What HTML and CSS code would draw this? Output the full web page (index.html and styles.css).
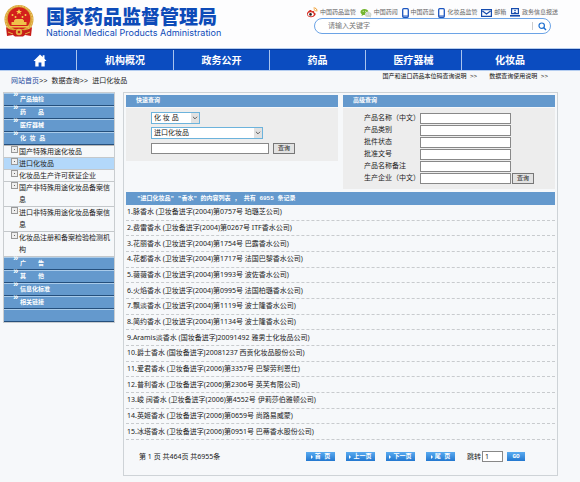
FILE: index.html
```html
<!DOCTYPE html>
<html lang="zh-CN">
<head>
<meta charset="utf-8">
<title>国家药品监督管理局</title>
<link rel="stylesheet" href="styles.css">
</head>
<body>
<header class="top">
  <a class="brand" href="#">
    <svg class="emblem" viewBox="0 0 30 32" aria-hidden="true">
      <ellipse cx="15" cy="14.500" rx="14.500" ry="14.500" fill="#d9a336"/>
      <ellipse cx="15" cy="14.500" rx="13.300" ry="13.500" fill="none" stroke="#f0cf72" stroke-width="1" stroke-dasharray="2 1"/>
      <circle cx="15" cy="13.500" r="11.300" fill="#d3201c"/>
      <path d="M15 4l.9 2h2.100l-1.700 1.300.7 2.100-2-1.300-2 1.300.7-2.100L12 6h2.100z" fill="#f7d04f"/>
      <g fill="#f7d04f"><circle cx="8.500" cy="10" r="1"/><circle cx="11.500" cy="12" r="1"/><circle cx="18.500" cy="12" r="1"/><circle cx="21.500" cy="10" r="1"/></g>
      <path d="M10 15.500l1.500-1.500h7l1.500 1.500v1.500h2.500v3h-15v-3H10zM5 21h20v1.500H5z" fill="#efc14a"/>
      <path d="M2 22q4 4 9 3h8q5 1 9-3l-1 9-6-1-2 1.500h-8L9 30l-6 1z" fill="#c71d19"/>
      <circle cx="15" cy="27" r="3.200" fill="#e3b243"/><circle cx="15" cy="27" r="1.300" fill="#c71d19"/>
      <path d="M4 27l5 2M26 27l-5 2" stroke="#e3b243"/>
    </svg>
    <span class="names"><strong>国家药品监督管理局</strong><span class="en">National Medical Products Administration</span></span>
  </a>
  <div class="tools">
    <ul class="social">
      <li><a href="#"><svg width="12" height="11" viewBox="0 0 12 11"><path d="M1 7c0-2 3-4.500 4.300-3.800.6.300.2 1.200.2 1.200s2.600-1 2.700.6c0 .4-.2.600-.2.600C12 7 8 10.500 5 10.300 2.500 10.200 1 8.800 1 7z" fill="#d52b20"/><ellipse cx="4.800" cy="7.300" rx="2.900" ry="2" fill="#fff"/><circle cx="4.500" cy="7.400" r="1.300" fill="#222"/><path d="M7.500 1c2-.5 4 1.200 3.300 3.500M7.800 2.800c1-.2 1.700.4 1.400 1.500" fill="none" stroke="#f09a28"/></svg>中国药品监管</a></li>
      <li><a href="#"><svg width="12" height="10" viewBox="0 0 12 10"><path d="M4.500 1C2 1 .5 2.400.5 4c0 1 .6 1.800 1.400 2.300L1.500 8l1.800-1h1.500C5 4.500 6.500 3.500 8.500 3.500 8 2 6.500 1 4.500 1z" fill="#72b52f"/><ellipse cx="8.200" cy="6.500" rx="3.200" ry="2.600" fill="#cfd5cc"/><path d="M9 8l2 1.700V7z" fill="#cfd5cc"/><g fill="#fff"><circle cx="3.200" cy="3.300" r=".5"/><circle cx="5.700" cy="3.300" r=".5"/><circle cx="7.200" cy="6" r=".5"/><circle cx="9.300" cy="6" r=".5"/></g></svg>中国药闻</a></li>
      <li><a href="#"><svg width="7" height="10" viewBox="0 0 7 10"><rect x=".7" y=".7" width="5.600" height="8.600" rx="1" fill="#fff" stroke="#1c56c0" stroke-width="1.300"/><path d="M1 8h5" stroke="#1c56c0"/></svg>中国药监</a></li>
      <li><a href="#"><svg width="7" height="10" viewBox="0 0 7 10"><rect x=".7" y=".7" width="5.600" height="8.600" rx="1" fill="#fff" stroke="#1c56c0" stroke-width="1.300"/><path d="M1 8h5" stroke="#1c56c0"/></svg>化妆品监管</a></li>
      <li><a href="#"><svg width="11" height="8" viewBox="0 0 11 8"><path d="M.6.600h9.800v6.800H.6zM1.500 2l4 3 4-3" fill="#fff" stroke="#164cae" stroke-width="1.200"/></svg>邮箱</a></li>
      <li><a href="#"><svg width="10" height="9" viewBox="0 0 10 9"><path d="M1.600.600h6.800v5H1.600z" fill="#fff" stroke="#164cae" stroke-width="1.200"/><path d="M0 7h10v1.600H0z" fill="#164cae"/><circle cx="5" cy="2.600" r=".8" fill="#164cae"/><path d="M3.500 5q1.500-2 3 0z" fill="#164cae"/></svg>政务信息报送</a></li>
    </ul>
    <form class="search">
      <input type="text" aria-label="请输入关键字" placeholder="请输入关键字">
      <button type="button" aria-label="搜索"><svg width="9" height="9" viewBox="0 0 9 9"><circle cx="3.700" cy="3.700" r="2.700" fill="none" stroke="#1d6fd0" stroke-width="1.200"/><path d="M5.800 5.800L8 8" stroke="#1d6fd0" stroke-width="1.400"/></svg></button>
    </form>
  </div>
</header>
<nav class="main-nav">
  <a class="home" href="#" aria-label="首页"><svg width="14" height="13" viewBox="0 0 14 13"><path d="M7 .5l2.700 2.600V1.300h1.800v3.500L13.500 7h-1.800v5.500H8.400V8.500H5.600v4H2.300V7H.5z" fill="#fff"/></svg></a>
  <a href="#">机构概况</a><a href="#">政务公开</a><a href="#">药品</a><a href="#">医疗器械</a><a class="last" href="#">化妆品</a>
</nav>
<div class="trail">
  <p class="crumbs"><a href="#">网站首页</a>&gt;&gt; 数据查询&gt;&gt; 进口化妆品</p>
  <p class="help"><a href="#">国产和进口药品本位码查询说明 &gt;&gt;</a><a href="#">数据查询使用说明 &gt;&gt;</a></p>
</div>
<div class="layout">
  <aside class="side">
    <a class="group" href="#">产品抽检</a>
    <a class="group" href="#">药　　品</a>
    <a class="group" href="#">医疗器械</a>
    <a class="group" href="#">化 妆 品</a>
    <ul>
      <li><a href="#">国产特殊用途化妆品</a></li>
      <li class="current"><a href="#">进口化妆品</a></li>
      <li><a href="#">化妆品生产许可获证企业</a></li>
      <li class="long"><a href="#">国产非特殊用途化妆品备案信息</a></li>
      <li class="long"><a href="#">进口非特殊用途化妆品备案信息</a></li>
      <li class="long"><a href="#">化妆品注册和备案检验检测机构</a></li>
    </ul>
    <a class="group" href="#">广　　告</a>
    <a class="group" href="#">其　　他</a>
    <a class="group" href="#">信息化标准</a>
    <a class="group" href="#">相关链接</a>
    <div class="group-end"></div>
  </aside>
  <main class="panel">
    <div class="queries">
      <section>
        <h2>快速查询</h2>
        <form class="quick">
          <div class="pick short"><select aria-label="类别"><option>化 妆 品</option></select><svg viewBox="0 0 8 12"><path d="M1.500 4.500L4 7l2.500-2.500" /></svg></div>
          <div class="pick"><select aria-label="数据库"><option>进口化妆品</option></select><svg viewBox="0 0 8 12"><path d="M1.500 4.500L4 7l2.500-2.500" /></svg></div>
          <div class="line"><input class="field" type="text" aria-label="关键字"><button class="go" type="button">查询</button></div>
        </form>
      </section>
      <section>
        <h2>高级查询</h2>
        <form class="advanced">
          <label for="f1">产品名称（中文）</label><input class="field" id="f1" type="text">
          <label for="f2">产品类别</label><input class="field" id="f2" type="text">
          <label for="f3">批件状态</label><input class="field" id="f3" type="text">
          <label for="f4">批准文号</label><input class="field" id="f4" type="text">
          <label for="f5">产品名称备注</label><input class="field" id="f5" type="text">
          <label for="f6">生产企业（中文）</label><input class="field" id="f6" type="text"><button class="go" type="button">查询</button>
        </form>
      </section>
    </div>
    <h2 class="result-title">"进口化妆品" "香水" 的内容列表 ， 共有 6955 条记录</h2>
    <ul class="results">
      <li><a href="#">1.脉香水 (卫妆备进字(2004)第0757号 珀璐芝公司)</a></li>
      <li><a href="#">2.费雷香水 (卫妆备进字(2004)第0267号 ITF香水公司)</a></li>
      <li><a href="#">3.花丽香水 (卫妆进字(2004)第1754号 巴露香水公司)</a></li>
      <li><a href="#">4.花都香水 (卫妆进字(2004)第1717号 法国巴黎香水公司)</a></li>
      <li><a href="#">5.薇薇香水 (卫妆进字(2004)第1993号 波佐香水公司)</a></li>
      <li><a href="#">6.火焰香水 (卫妆进字(2004)第0995号 法国柏璐香水公司)</a></li>
      <li><a href="#">7.飘淡香水 (卫妆进字(2004)第1119号 波士隆香水公司)</a></li>
      <li><a href="#">8.简约香水 (卫妆进字(2004)第1134号 波士隆香水公司)</a></li>
      <li><a href="#">9.Aramis淡香水 (国妆备进字J20091492 雅男士化妆品公司)</a></li>
      <li><a href="#">10.爵士香水 (国妆备进字J20081237 西贡化妆品股份公司)</a></li>
      <li><a href="#">11.爱君香水 (卫妆备进字(2006)第3357号 巴黎劳利恩仕)</a></li>
      <li><a href="#">12.普利香水 (卫妆备进字(2006)第2306号 英芙有限公司)</a></li>
      <li><a href="#">13.峻 阔香水 (卫妆备进字(2006)第4552号 伊莉莎伯雅顿公司)</a></li>
      <li><a href="#">14.英姬香水 (卫妆备进字(2006)第0659号 尚路易威蒙)</a></li>
      <li><a href="#">15.冰塔香水 (卫妆备进字(2006)第0951号 巴蒂香水股份公司)</a></li>
    </ul>
    <form class="pager">
      <p>第 1 页 共464页 共6955条</p>
      <div class="steps">
        <button type="button">首 页</button><button type="button">上一页</button><button type="button">下一页</button><button type="button">尾 页</button>
      </div>
      <label for="page">跳转</label><input class="field" id="page" type="text" value="1">
      <button class="jump" type="button">GO</button>
    </form>
  </main>
</div>
</body>
</html>
```
FILE: styles.css
```css
* { box-sizing: border-box; }
body, p, ul, h2 { margin: 0; padding: 0; }
ul { list-style: none; }
body {
  background: #f6f8fa;
  color: #222;
  font: 7px/12px "Noto Sans", "Noto Sans CJK SC", sans-serif;
}
a { color: inherit; text-decoration: none; }
input, select, button { font: inherit; color: inherit; margin: 0; padding: 0; border-radius: 0; }
svg { flex: none; display: block; }

.top {
  display: flex;
  justify-content: space-between;
  height: 49px;
  padding: 5px 22px 0 4px;
  background: #fdfdfe;
  border-bottom: 1px solid #b4cdf0;
}
.brand { display: flex; gap: 12px; color: #0d4bb8; }
.emblem { width: 30px; height: 32px; }
.names { display: flex; flex-direction: column; white-space: nowrap; }
.names strong { font: 900 19px/22px "Noto Sans CJK SC", sans-serif; }
.en { padding-top: 1px; font: 9px/10px Inter, "Liberation Sans", sans-serif; }
.tools { width: 252px; padding-top: 2px; }
.social { display: flex; justify-content: space-between; color: #666; font-size: 6px; line-height: 11px; white-space: nowrap; }
.social a { display: flex; align-items: center; gap: 2px; }
.search {
  display: flex;
  height: 16px;
  margin: 0 7px 0 8px;
  border: 1px solid #6ba3e6;
  border-radius: 8px;
  background: #fff;
}
.search input { flex: 1; min-width: 0; padding-left: 13px; border: 0; background: none; outline: 0; }
.search input::placeholder { color: #777; }
.search button { width: 18px; margin: 3px 0; padding-left: 5px; border: 0; border-left: 1px solid #ccc; background: none; }

.main-nav {
  display: grid;
  grid-template-columns: 77fr 97fr 96fr 96fr 96fr 96fr 22fr;
  height: 21px;
  background: #0b4cc0;
  border-top: 1px solid #083a9c;
  color: #fff;
  font-size: 10px;
  font-weight: 700;
}
.main-nav a { display: flex; align-items: center; justify-content: center; border-right: 1px solid #a9c4ee; }
.main-nav .home { padding-left: 4px; }
.main-nav .last { border-right: 0; }

.trail {
  display: flex;
  justify-content: space-between;
  height: 22px;
  padding: 0 32px 0 11px;
  border-top: 1px solid #b4cdf0;
  font-family: "Liberation Mono", "Noto Sans CJK SC", monospace;
}
.crumbs { padding-top: 4px; }
.crumbs a { color: #1a4a9c; }
.help { display: flex; gap: 12px; font-size: 6px; line-height: 11px; color: #111; }

.layout { display: flex; align-items: flex-start; gap: 8px; padding: 0 22px 5px 3px; }
.side { width: 112px; border: 1px solid #c9cdd0; }
.group, .group-end {
  display: block;
  height: 13px;
  background: #6499cd;
  border-top: 1px solid #a9cbea;
  border-bottom: 1px solid #254f7c;
}
.group {
  position: relative;
  padding-left: 16px;
  color: #fff;
  font: 700 6px/11px "Liberation Mono", "Noto Sans CJK SC", monospace;
}
.group::before { content: "»"; position: absolute; left: 9px; top: -4px; font-size: 9px; }
.side ul { border-top: 1px solid #b8b8b8; }
.side li { position: relative; padding-left: 15px; box-shadow: inset 0 -1px #c4c8cb; }
.side li::before {
  content: "";
  position: absolute;
  left: 7px;
  top: 0;
  width: 5px;
  height: 5px;
  border: 1px solid #999;
  background: linear-gradient(#666, #666) center / 1px 1px no-repeat #eee;
}
.side .long { padding-bottom: 1px; }
.side .current { background: #b3d8fa; }

.panel { flex: 1; min-width: 0; padding: 2px; border: 1px solid #ced3d7; }
.queries { display: flex; align-items: flex-start; gap: 5px; min-height: 97px; }
.queries section { flex: 1; min-width: 0; }
h2 {
  padding-left: 10px;
  background: #6499cd;
  color: #fff;
  font: 700 6px/12px "Liberation Mono", "Noto Sans CJK SC", monospace;
}
.quick, .advanced { margin-top: 1px; background: #ededed; }
.quick { padding: 4px 0 7px 25px; display: flex; flex-direction: column; gap: 3px; }
.pick { position: relative; width: 112px; height: 12px; }
.pick.short { width: 49px; }
.pick select { width: 100%; height: 12px; padding-left: 2px; border: 1px solid #6cb3dc; background: #fff; appearance: none; line-height: 10px; display: block; }
.pick svg { position: absolute; right: 1px; top: 1px; width: 8px; height: 10px; background: #e1e1e1; fill: none; stroke: #444; pointer-events: none; }
.line { display: flex; gap: 4px; padding-top: 1px; }
.field { height: 11px; border: 1px solid #888; background: #fff; min-width: 0; }
.line .field { width: 118px; }
.go { width: 22px; height: 11px; border: 1px solid #777; background: #e2e2e2; line-height: 9px; font-size: 6px; }
.advanced {
  display: grid;
  grid-template-columns: 55px 91px 22px;
  column-gap: 1px;
  grid-auto-rows: 12px;
  align-items: center;
  padding: 4px 0 5px 21px;
  white-space: nowrap;
}
.advanced label { grid-column: 1; }
.result-title { padding-left: 11px; line-height: 13px; white-space: pre; }
.results { display: grid; grid-auto-rows: 1fr; min-height: 235px; color: #222; }
.results li { display: flex; align-items: center; padding-left: 1px; border-bottom: 1px dashed #c8cbce; }
.pager { display: flex; align-items: center; height: 33px; padding: 0 30px 0 13px; }
.pager p { flex: 1; }
.steps { display: flex; gap: 11px; margin-right: 12px; }
.steps button, .jump {
  width: 29px;
  height: 9px;
  border: 0;
  background: linear-gradient(#5aabf0, #2378d0);
  color: #fff;
  font: 700 6px/9px "Liberation Mono", "Noto Sans CJK SC", monospace;
}
.steps button { display: flex; align-items: center; justify-content: center; gap: 2px; white-space: nowrap; }
.steps button::before { content: ""; border: 2px solid transparent; border-left-color: #fff; border-right: 0; }
.pager .field { width: 21px; margin: 0 4px 0 1px; padding-left: 2px; }
.jump { width: 18px; }
```
